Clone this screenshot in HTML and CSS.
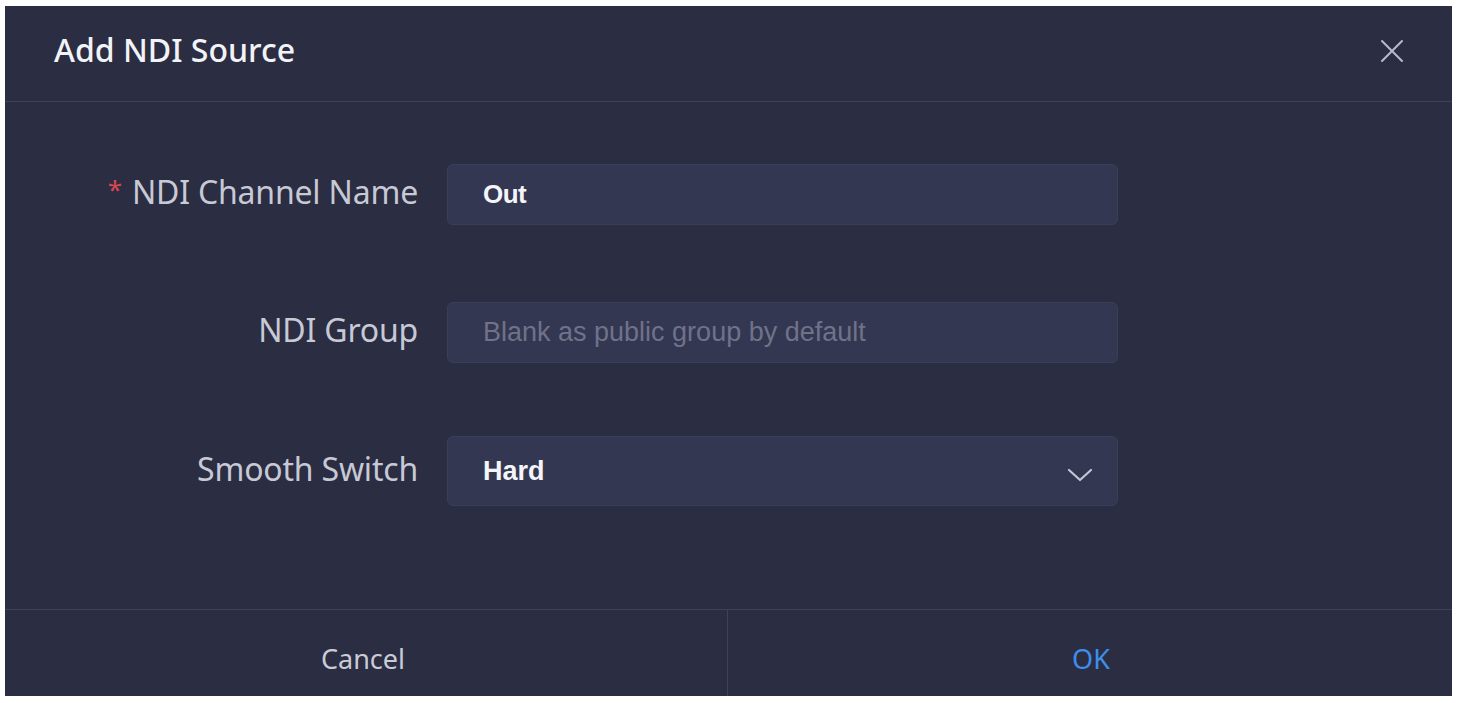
FILE: index.html
```html
<!DOCTYPE html>
<html>
<head>
<meta charset="utf-8">
<link rel="stylesheet" href="styles.css">
</head>
<body>
<div class="dialog">
  <div class="header">
    <div class="title">Add NDI Source</div>
    <button class="close" aria-label="Close">
      <svg width="24" height="24" viewBox="0 0 24 24"><path d="M2 2 L22 22 M22 2 L2 22" stroke="#b9bbc9" stroke-width="2" fill="none" stroke-linecap="round"/></svg>
    </button>
  </div>
  <div class="body">
    <div class="row row1">
      <label class="label"><span class="req">*</span>NDI Channel Name</label>
      <div class="field"><span class="value">Out</span></div>
    </div>
    <div class="row row2">
      <label class="label">NDI Group</label>
      <div class="field"><span class="placeholder">Blank as public group by default</span></div>
    </div>
    <div class="row row3">
      <label class="label">Smooth Switch</label>
      <div class="field select"><span class="value">Hard</span>
        <svg class="chev" width="26" height="14" viewBox="0 0 26 14"><path d="M2 2 L13 12 L24 2" stroke="#c4c6d3" stroke-width="2.2" fill="none" stroke-linecap="round" stroke-linejoin="round"/></svg>
      </div>
    </div>
  </div>
  <div class="footer">
    <button class="btn cancel">Cancel</button>
    <button class="btn ok">OK</button>
  </div>
</div>
</body>
</html>
```

FILE: styles.css
```css
html, body {
  margin: 0;
  padding: 0;
  background: #ffffff;
}
body {
  padding: 6px 5px 7px 5px;
  font-family: "Noto Sans", "Open Sans", sans-serif;
}
.dialog {
  width: 1447px;
  height: 690px;
  background: #2b2d42;
  display: flex;
  flex-direction: column;
}
.header {
  flex: none;
  height: 96px;
  border-bottom: 1px solid #3e4159;
  display: flex;
  align-items: center;
  justify-content: space-between;
  padding: 0 48px 0 49px;
  box-sizing: border-box;
}
.title {
  color: #f2f3f7;
  font-size: 32px;
  font-weight: 500;
  letter-spacing: 0;
  margin-top: -8px;
}
.close {
  background: none;
  border: 0;
  padding: 0;
  width: 24px;
  height: 24px;
  margin-top: -6px;
  cursor: pointer;
  display: flex;
}
.body {
  flex: 1;
  padding-top: 62px;
  display: flex;
  flex-direction: column;
}
.row {
  display: grid;
  grid-template-columns: 442px 671px;
  align-items: center;
}
.row2 { margin-top: 77px; }
.row3 { margin-top: 73px; }
.label {
  text-align: right;
  padding-right: 29px;
  color: #c7c9d5;
  font-size: 32px;
  letter-spacing: -0.2px;
  margin-top: -6px;
}
.req {
  color: #d9464f;
  font-size: 26px;
  margin-right: 10px;
  position: relative;
  top: -5px;
}
.field {
  height: 61px;
  box-sizing: border-box;
  background: #343751;
  border: 1px solid #3b3e58;
  border-radius: 6px;
  display: flex;
  align-items: center;
  padding: 0 24px 0 35px;
  font-family: "Liberation Sans", Arial, sans-serif;
  font-size: 26px;
}
.field.select {
  height: 70px;
  justify-content: space-between;
}
.value {
  color: #f4f5f8;
  font-weight: 700;
  letter-spacing: -0.5px;
}
.select .value {
  letter-spacing: 0;
  font-size: 27px;
}
.placeholder {
  color: #6f7289;
  font-size: 27px;
}
.chev {
  margin-top: 8px;
}
.footer {
  flex: none;
  height: 86px;
  border-top: 1px solid #3e4159;
  display: grid;
  grid-template-columns: 723px 1fr;
}
.btn {
  background: none;
  border: 0;
  font-family: "Noto Sans", "Open Sans", sans-serif;
  font-size: 27px;
  padding: 11px 0 0 0;
  cursor: pointer;
}
.cancel {
  color: #c9cbd6;
  border-right: 1px solid #3e4159;
  padding-right: 6px;
}
.ok {
  color: #3d8fea;
  padding-left: 2px;
}
```
